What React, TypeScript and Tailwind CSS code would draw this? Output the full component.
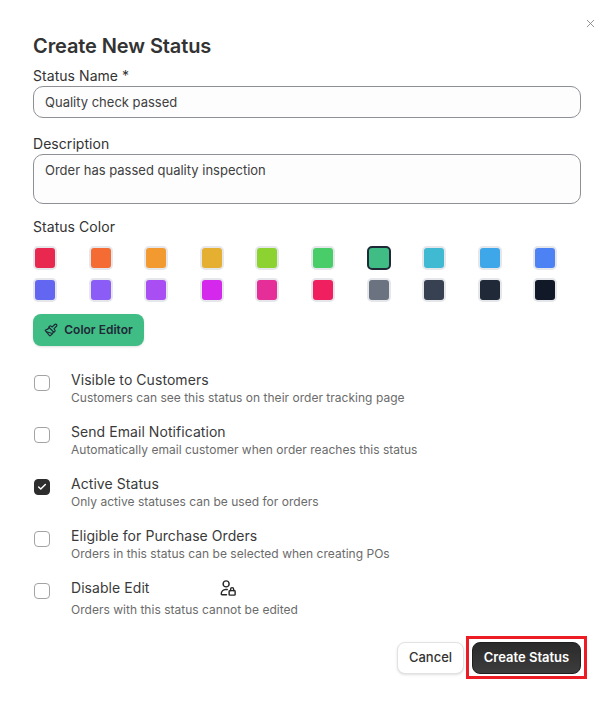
import React from 'react';
import { Check, Paintbrush, X } from 'lucide-react';

const COLORS = [
  '#e9284f', '#f46b33', '#f29a30', '#e5af32', '#8cd230', '#48cd68', '#3fbd85', '#40b9d2', '#3ea7e9', '#4c82f3',
  '#6366f1', '#8b5cf6', '#a84ef2', '#d428ec', '#e52e97', '#ef1f60', '#6b7280', '#374151', '#1f2937', '#111827',
];

const OPTIONS = [
  { title: 'Visible to Customers', text: 'Customers can see this status on their order tracking page', checked: false },
  { title: 'Send Email Notification', text: 'Automatically email customer when order reaches this status', checked: false },
  { title: 'Active Status', text: 'Only active statuses can be used for orders', checked: true },
  { title: 'Eligible for Purchase Orders', text: 'Orders in this status can be selected when creating POs', checked: false },
];

const Box: React.FC<{ checked: boolean }> = ({ checked }) => (
  <div
    className={`w-4 h-4 mt-[4px] ml-px shrink-0 rounded-[4px] border flex items-center justify-center ${
      checked ? 'bg-[#2d2d2d] border-[#2d2d2d]' : 'bg-white border-[#a3a3a3]'
    }`}
  >
    {checked && <Check size={10} strokeWidth={3.5} className="text-white" />}
  </div>
);

const UserLockIcon: React.FC = () => (
  <svg width="18" height="18" viewBox="0 0 24 24" fill="none" stroke="#262626" strokeWidth="1.9" strokeLinecap="round" strokeLinejoin="round">
    <circle cx="9.5" cy="6.5" r="4" />
    <path d="M10 21H4a1 1 0 0 1-1-1a6 6 0 0 1 6-6h2" />
    <rect x="13.5" y="15.5" width="8" height="6" rx="1" />
    <path d="M15.5 15.5v-2a2 2 0 0 1 4 0v2" />
  </svg>
);

const App: React.FC = () => {
  return (
    <div className="relative w-[615px] h-[708px] bg-white px-[33px] pt-[32px] font-['Inter',sans-serif] text-[#333333] overflow-hidden">
      <button className="absolute top-[17px] right-[18px] text-[#7b7b7b]">
        <X size={13} strokeWidth={1.5} />
      </button>

      <h1 className="text-[20px] leading-[28px] font-semibold tracking-[-0.1px]">Create New Status</h1>

      <label className="block mt-[6px] text-sm leading-5 tracking-[0.05px]">Status Name *</label>
      <input
        readOnly
        value="Quality check passed"
        className="block w-[548px] h-8 px-[11px] rounded-[10px] border border-[#8d9094] bg-[#fdfdfd] text-[13px] text-[#404040] outline-none"
      />

      <label className="block mt-[16px] text-sm leading-5 tracking-[0.05px]">Description</label>
      <textarea
        readOnly
        value="Order has passed quality inspection"
        className="block w-[548px] h-[50px] px-[11px] py-[6px] rounded-[10px] border border-[#8d9094] bg-[#fdfdfd] text-[13px] leading-[18px] text-[#404040] outline-none resize-none"
      />

      <label className="block mt-[13px] text-sm leading-5 tracking-[0.05px]">Status Color</label>
      <div className="grid grid-cols-10 gap-2 w-[548px] mt-[9px]">
        {COLORS.map((c, i) => (
          <div
            key={c}
            className={`w-6 h-6 rounded-[5px] border-2 ${i === 6 ? 'border-[#1f2937]' : 'border-[#e5e7eb]'}`}
            style={{ backgroundColor: c }}
          />
        ))}
      </div>

      <button className="flex items-center justify-center gap-[6px] mt-[12px] w-[111px] h-8 rounded-lg bg-[#3fbd85] text-[#1f2937] text-xs font-semibold shadow-sm">
        <Paintbrush size={14} strokeWidth={2} />
        Color Editor
      </button>

      <div className="mt-[25px] flex flex-col gap-[16px]">
        {OPTIONS.map((o) => (
          <div key={o.title} className="flex items-start gap-[21px]">
            <Box checked={o.checked} />
            <div>
              <div className="text-sm leading-[18px] text-[#3a3a3a] tracking-[0.06px]">{o.title}</div>
              <div className="text-xs leading-[18px] text-[#6b6b6b] tracking-[0.02px]">{o.text}</div>
            </div>
          </div>
        ))}
        <div className="flex items-start gap-[21px]">
          <Box checked={false} />
          <div>
            <div className="flex items-center text-sm leading-[18px] text-[#3a3a3a] tracking-[0.06px]">
              <span className="w-[148px]">Disable Edit</span>
              <UserLockIcon />
            </div>
            <div className="text-xs leading-[18px] text-[#6b6b6b] tracking-[0.02px] mt-[4px]">Orders with this status cannot be edited</div>
          </div>
        </div>
      </div>

      <div className="flex justify-end gap-2 mt-[23px] w-[548px]">
        <button className="w-[67px] h-8 rounded-lg border border-[#e2e2e2] bg-white text-[13px] font-medium text-[#333333] shadow-sm">
          Cancel
        </button>
        <div className="relative">
          <button className="w-[109px] h-8 rounded-lg border border-[#1f1f1f] bg-gradient-to-b from-[#2a2a2a] to-[#3d3d3d] text-[13px] font-semibold text-white">
            Create Status
          </button>
          <div className="absolute -left-[6px] -top-[6px] w-[121px] h-[43px] border-[3px] border-[#ed1c24] pointer-events-none" />
        </div>
      </div>
    </div>
  );
};

export default App;
